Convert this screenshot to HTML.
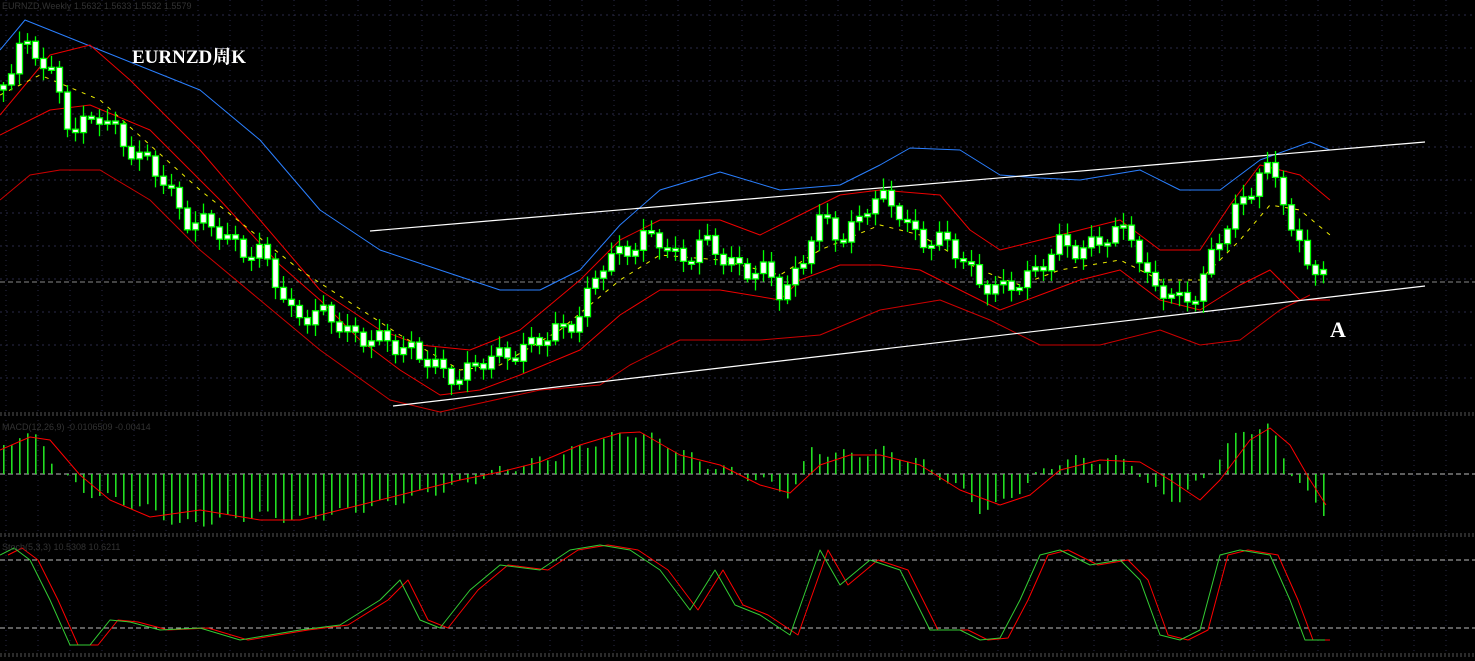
<!DOCTYPE html>
<html><head><meta charset="utf-8"><style>
html,body{margin:0;padding:0;background:#000;overflow:hidden}
svg{display:block}
</style></head><body>
<svg id="s" width="1475" height="661" xmlns="http://www.w3.org/2000/svg" style="background:#000">
<text x="2" y="9" font-family="Liberation Sans, sans-serif" font-size="9" fill="#333">EURNZD,Weekly 1.5632 1.5633 1.5532 1.5579</text>
<text x="2" y="430" font-family="Liberation Sans, sans-serif" font-size="9" fill="#333">MACD(12,26,9) -0.0106509 -0.00414</text>
<text x="2" y="550" font-family="Liberation Sans, sans-serif" font-size="9" fill="#333">Stoch(5,3,3) 10.5308 10.6211</text>
<text x="132" y="63" font-family="Liberation Serif, 'Noto Serif CJK SC', serif" font-size="19" font-weight="bold" fill="#fff">EURNZD周K</text>
<text x="1330" y="337" font-family="Liberation Serif, serif" font-size="22" font-weight="bold" fill="#fff">A</text>
</svg>
<script>
var s=document.getElementById('s'),out='';
function el(t){out+=t;}
for(var x=6;x<1475;x+=32){el('<line x1="'+x+'" y1="0" x2="'+x+'" y2="655" stroke="#2a2a48" stroke-dasharray="1,4"/>');}
for(var y=15;y<410;y+=33){el('<line x1="0" y1="'+y+'" x2="1475" y2="'+y+'" stroke="#2a2a48" stroke-dasharray="2,4"/>');}
[413,415,534,536,654,656].forEach(function(y){el('<line x1="0" y1="'+y+'" x2="1475" y2="'+y+'" stroke="#555" stroke-dasharray="2,2"/>');});
el('<line x1="0" y1="282" x2="1475" y2="282" stroke="#888" stroke-dasharray="5,3"/>');
[474,560,628].forEach(function(y){el('<line x1="0" y1="'+y+'" x2="1475" y2="'+y+'" stroke="#bbb" stroke-dasharray="5,3"/>');});
function interp(p,x){if(x<=p[0][0])return p[0][1];for(var i=1;i<p.length;i++){if(x<=p[i][0]){var a=p[i-1],b=p[i];return a[1]+(b[1]-a[1])*(x-a[0])/(b[0]-a[0]);}}return p[p.length-1][1];}
function poly(p,c,w,d){var pts=p.map(function(q){return q[0]+','+q[1]}).join(' ');el('<polyline points="'+pts+'" fill="none" stroke="'+c+'" stroke-width="'+(w||1)+'"'+(d?' stroke-dasharray="'+d+'"':'')+' stroke-linejoin="round"/>');}
var blue=[[0,50],[25,20],[200,90],[260,140],[320,210],[380,250],[440,270],[500,290],[540,290],[580,270],[620,225],[660,190],[720,172],[780,190],[840,185],[880,165],[910,148],[960,150],[1000,175],[1040,178],[1080,180],[1140,170],[1180,190],[1220,190],[1260,160],[1310,142],[1330,150]];
var up=[[0,115],[50,55],[90,45],[130,80],[200,150],[260,220],[320,290],[380,330],[420,345],[470,350],[520,330],[580,280],[620,240],[660,220],[720,220],[760,235],[800,215],[840,195],[880,190],[940,195],[970,230],[1000,250],[1040,240],[1080,230],[1120,220],[1160,250],[1200,250],[1230,205],[1260,165],[1300,175],[1330,200]];
var lo=[[0,135],[50,110],[90,105],[150,130],[220,200],[280,265],[320,300],[360,340],[400,370],[440,395],[480,390],[520,375],[580,350],[620,315],[660,290],[720,290],[780,300],[800,280],[840,265],[880,265],[920,270],[960,290],[1000,310],[1040,295],[1080,280],[1120,270],[1160,300],[1200,310],[1240,285],[1270,270],[1300,300],[1330,300]];
var lo2=[[0,200],[30,175],[60,170],[100,170],[150,200],[200,250],[260,300],[320,350],[390,400],[440,412],[540,390],[600,385],[630,365],[680,340],[760,340],[820,335],[880,310],[940,300],[990,320],[1040,345],[1100,345],[1160,330],[1200,345],[1240,340],[1280,310],[1310,295]];
var mid=[[0,95],[40,75],[100,100],[200,190],[300,270],[400,335],[460,370],[500,365],[560,330],[620,280],[660,255],[720,260],[780,275],[820,250],[880,225],[920,235],[980,270],[1020,285],[1060,270],[1120,260],[1160,280],[1200,280],[1240,240],[1270,205],[1300,210],[1330,235]];
poly(blue,'#2a7fff');poly(up,'#e00');poly(lo,'#e00');poly(lo2,'#c00');poly(mid,'#ee0',1,'4,6');
el('<line x1="370" y1="231" x2="1425" y2="142" stroke="#fff" stroke-width="1.2"/>');
el('<line x1="393" y1="406" x2="1425" y2="286" stroke="#fff" stroke-width="1.2"/>');
var pr=[[3,85],[18,40],[30,50],[50,75],[70,125],[100,120],[130,145],[160,180],[185,215],[220,235],[260,255],[290,310],[330,320],[380,345],[410,345],[445,380],[470,365],[500,360],[520,345],[550,340],[580,310],[600,270],[640,235],[660,245],[680,260],[700,240],[720,260],[760,270],[780,295],[800,265],[815,220],[840,240],[870,200],[900,210],[920,240],[960,250],[980,285],[1000,295],[1020,275],[1040,270],[1060,245],[1100,245],[1130,225],[1150,290],[1180,300],[1200,285],[1220,240],[1240,200],[1260,170],[1280,185],[1290,230],[1310,260],[1326,285]];
var prev=90;
for(var i=0;i<=165;i++){var x=3+i*8;var c=interp(pr,x)+Math.sin(i*1.7)*9+Math.sin(i*0.9)*5;var o=prev;prev=c;
var t=Math.min(o,c),b=Math.max(o,c);if(b-t<3){b=t+3;}
var hi=t-3-Math.abs(Math.sin(i*2.3))*9,lw=b+3+Math.abs(Math.cos(i*1.3))*9;
el('<line x1="'+(x+0.5)+'" y1="'+hi+'" x2="'+(x+0.5)+'" y2="'+lw+'" stroke="#0f0" stroke-width="1.3"/>');
el('<rect x="'+(x-2.5)+'" y="'+t+'" width="6" height="'+(b-t)+'" fill="#fff" stroke="#0f0" stroke-width="1.3"/>');}
var hist=[[3,445],[20,435],[40,440],[60,474],[80,490],[150,510],[180,525],[260,515],[300,520],[380,505],[460,485],[500,470],[560,455],[600,440],[630,432],[660,440],[700,462],[760,480],[790,495],[810,450],[850,455],[880,450],[920,462],[960,490],[980,510],[1000,505],[1030,480],[1060,460],[1100,460],[1130,460],[1150,490],[1180,500],[1210,470],[1240,430],[1270,428],[1290,470],[1310,500],[1326,515]];
for(var i=0;i<=165;i++){var x=3+i*8;var v=interp(hist,x)+Math.sin(i*1.3)*5;el('<rect x="'+x+'" y="'+Math.min(474,v)+'" width="1.6" height="'+Math.abs(v-474)+'" fill="#2d2"/>');}
poly([[0,450],[30,437],[50,440],[80,475],[110,500],[150,517],[200,510],[260,520],[300,520],[360,505],[420,490],[460,480],[500,472],[540,462],[580,445],[620,433],[640,432],[680,455],[720,465],[760,485],[790,493],[820,465],[850,455],[880,455],[920,465],[960,490],[1000,505],[1030,495],[1060,470],[1100,460],[1140,462],[1170,480],[1200,500],[1220,480],[1250,440],[1270,428],[1290,445],[1310,480],[1326,505]],'#f00');
var st=[[0,555],[14,548],[30,560],[50,600],[70,645],[90,645],[110,620],[130,622],[160,630],[200,628],[240,640],[300,630],[340,625],[380,600],[400,580],[420,620],[440,628],[470,590],[500,565],[540,570],[570,550],[600,545],[630,550],[660,570],[690,610],[715,570],[735,605],[760,615],[790,635],[820,550],[840,585],[870,560],[900,570],[930,630],[960,630],[980,640],[1000,638],[1020,600],[1040,555],[1060,550],[1090,565],[1120,560],[1140,580],[1160,635],[1180,640],[1200,630],[1220,555],[1240,550],[1270,555],[1290,600],[1305,640],[1325,640]];
poly(st.map(function(q){return [Math.min(q[0]+8,1330),q[1]]}),'#f00');
poly(st,'#3c3');
s.insertAdjacentHTML('afterbegin',out);
</script>
</body></html>
